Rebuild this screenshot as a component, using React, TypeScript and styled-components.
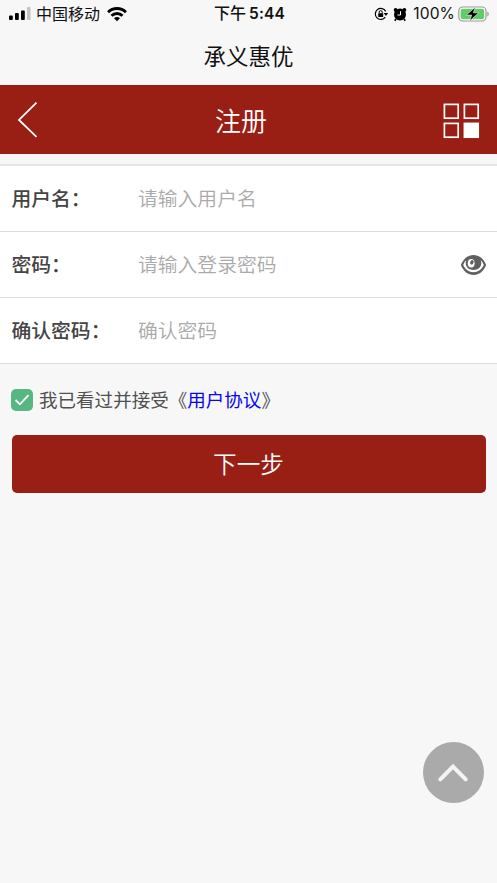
import React, { useState } from 'react';
import styled, { createGlobalStyle } from 'styled-components';

const RED = '#991e14';

const GlobalStyle = createGlobalStyle`
  * { box-sizing: border-box; }
  html, body { margin: 0; background: #f7f7f7; }
  body, input, button {
    font-family: "Noto Sans CJK SC", sans-serif;
  }
`;

const Screen = styled.main`
  position: relative;
  display: flex;
  flex-direction: column;
  width: 100%;
  height: 883px;
  overflow: hidden;
  background: #f7f7f7;
`;

const StatusBar = styled.div`
  display: grid;
  grid-template-columns: 1fr auto 1fr;
  align-items: center;
  height: 27px;
  padding: 0 7px 0 9px;
  font-family: Inter, "Noto Sans CJK SC", sans-serif;
  font-size: 16px;
  line-height: 27px;
  color: #111;
  white-space: nowrap;
`;

const StatusGroup = styled.div<{ $end?: boolean }>`
  display: flex;
  align-items: center;
  justify-content: ${(p) => (p.$end ? 'flex-end' : 'flex-start')};
  svg { display: block; flex: none; }
`;

const Carrier = styled.span`
  margin: 0 7px 0 5px;
`;

const Clock = styled.div`
  display: flex;
  gap: 3px;
  font-weight: 500;
`;

const Digits = styled.span`
  font-weight: 600;
  font-size: 15.5px;
  letter-spacing: 0.2px;
  line-height: 28px;
`;

const Percent = styled.span`
  margin: 0 3px 0 6px;
  font-size: 15.6px;
  letter-spacing: 0.1px;
  line-height: 28px;
`;

const PageTitle = styled.div`
  height: 58px;
  padding-top: 1px;
  font-size: 22.5px;
  line-height: 55px;
  text-align: center;
  color: #111;
`;

const NavBar = styled.header`
  display: grid;
  grid-template-columns: 60px 1fr 60px;
  align-items: center;
  height: 69px;
  background: ${RED};
  color: #fff;
`;

const NavTitle = styled.h1`
  margin: 0;
  padding-right: 15px;
  font-size: 26px;
  font-weight: 350;
  line-height: 69px;
  text-align: center;
`;

const NavButton = styled.button<{ $end?: boolean }>`
  display: flex;
  justify-content: ${(p) => (p.$end ? 'flex-end' : 'flex-start')};
  padding: ${(p) => (p.$end ? '2px 17px 0 0' : '0 0 0 17px')};
  border: 0;
  background: none;
  svg { display: block; }
`;

const Form = styled.form`
  display: flex;
  flex-direction: column;
  margin-top: 10px;
`;

const Fields = styled.div`
  border-top: 2px solid #e6e6e6;
`;

const Field = styled.label`
  display: flex;
  align-items: center;
  height: 66px;
  padding: 0 10px 0 11.5px;
  border-bottom: 1px solid #dcdcdc;
  background: #fff;
`;

const FieldName = styled.span`
  flex: 0 0 126.5px;
  padding-bottom: 2px;
  font-size: 19.8px;
  font-weight: 500;
  color: #444;
`;

const FieldInput = styled.input`
  flex: 1;
  min-width: 0;
  height: 40px;
  padding: 0 0 2px;
  border: 0;
  outline: 0;
  background: none;
  font-size: 19.8px;
  color: #444;
  &::placeholder { color: #aaa; opacity: 1; font-weight: 350; }
`;

const RevealButton = styled.button`
  padding: 0;
  border: 0;
  background: none;
  svg { display: block; }
`;

const Agreement = styled.div`
  display: flex;
  align-items: center;
  height: 71px;
  padding: 0 12px 0 11px;
  font-size: 18.55px;
  color: #505050;
`;

const AgreementText = styled.span`
  padding-bottom: 2px;
`;

const CheckBox = styled.button`
  display: flex;
  align-items: center;
  justify-content: center;
  width: 22px;
  height: 22px;
  margin-right: 6px;
  padding: 0;
  border: 0;
  border-radius: 5px;
  background: #56b783;
`;

const Terms = styled.a`
  color: #0505ee;
  text-decoration: none;
`;

const Submit = styled.button`
  height: 57.5px;
  margin: 0 11.5px;
  padding: 0 0 1px;
  border: 0;
  border-radius: 5px;
  background: ${RED};
  color: #fff;
  font-size: 23.6px;
  font-weight: 350;
`;

const ToTop = styled.button`
  position: absolute;
  right: 13.5px;
  bottom: 80px;
  display: flex;
  align-items: center;
  justify-content: center;
  width: 61px;
  height: 61px;
  padding: 0;
  border: 0;
  border-radius: 50%;
  background: #aaa;
`;

const Signal = () => (
  <svg width="22" height="14" viewBox="0 0 22 14">
    <rect x="0" y="8.5" width="3.8" height="4.5" rx="1" fill="#000" />
    <rect x="6" y="6" width="3.8" height="7" rx="1" fill="#000" />
    <rect x="12" y="3.5" width="3.8" height="9.5" rx="1" fill="#000" />
    <rect x="18" y="0" width="3.6" height="13" rx="1" fill="#c4c4c4" />
  </svg>
);

const Wifi = () => (
  <svg width="20" height="15" viewBox="0 0 20 15" fill="none" stroke="#000" strokeWidth="2.9">
    <path d="M1.1 5.2a12.6 12.6 0 0 1 17.8 0" />
    <path d="M4.5 8.8a7.8 7.8 0 0 1 11 0" />
    <path d="M10 14.3l-3-3a4.2 4.2 0 0 1 6 0z" fill="#000" stroke="none" />
  </svg>
);

const RotationLock = () => (
  <svg width="15" height="14" viewBox="0 0 15 14">
    <path d="M11.7 4.4A5.5 5.5 0 1 0 11.3 10.2" fill="none" stroke="#000" strokeWidth="1.2" />
    <path d="M9.7 6.1h4.4l-2.2 2.9z" />
    <rect x="4.2" y="6.3" width="5" height="3.7" rx=".6" />
    <path d="M5.2 6.5V5.1a1.5 1.5 0 0 1 3 0v1.400" fill="none" stroke="#000" />
  </svg>
);

const Alarm = () => (
  <svg width="14" height="15" viewBox="0 0 14 15">
    <circle cx="7" cy="7.5" r="6" />
    <circle cx="2.6" cy="2.9" r="1.9" />
    <circle cx="11.4" cy="2.9" r="1.9" />
    <path d="M3 12l-1.2 1.7M11 12l1.2 1.7" stroke="#000" strokeWidth="1.7" />
    <path d="M7.5 4.2v3.8H4.5" fill="none" stroke="#fff" />
  </svg>
);

const Battery = () => (
  <svg width="32" height="16" viewBox="0 0 32 16">
    <rect x=".8" y="1" width="27.2" height="14" rx="4" fill="#fff" stroke="#999" strokeWidth="1.2" />
    <rect x="2.6" y="2.8" width="23.6" height="10.4" rx="2.2" fill="#62cc68" />
    <path d="M29.3 5.7c2 .7 2 4 0 4.7z" fill="#999" />
    <path d="M17.3 1.2L8.3 9.1h5.4l-2 5.8 9-8.1h-5.4z" fill="#000" stroke="#f7f7f7" strokeWidth=".6" />
  </svg>
);

const BackIcon = () => (
  <svg width="22" height="38" viewBox="0 0 22 38" fill="none" stroke="#fff" strokeWidth="1.8">
    <path d="M19.5 1.7L2 18.9l17.5 17" />
  </svg>
);

const GridIcon = () => (
  <svg width="37" height="36" viewBox="0 0 37 36" fill="none" stroke="#fff" strokeWidth="1.7">
    <rect x="1.4" y="1.4" width="13.8" height="13.8" />
    <rect x="21.4" y="1.4" width="13.8" height="13.8" />
    <rect x="1.4" y="20.4" width="13.8" height="13.8" />
    <rect x="21.4" y="20.4" width="13.8" height="13.8" fill="#fff" />
  </svg>
);

const EyeIcon = () => (
  <svg width="27" height="22" viewBox="0 0 27 22">
    <path d="M.8 11C3.5 4.5 8 1 13.5 1s10 3.5 12.7 10C23.5 17.5 19 21 13.5 21S3.5 17.5.8 11z" fill="#606060" />
    <path d="M6.2 6.2C4.8 7.5 3.9 9.2 3.2 11c2.100 4.500 5.700 7.200 10.300 7.200s8.200-2.700 10.300-7.200c-.7-1.800-1.600-3.500-3-4.800 1.800 5.500-1.700 9.800-7.300 9.800S4.400 11.700 6.200 6.200z" fill="#fff" />
    <ellipse cx="11.2" cy="9.3" rx="3.4" ry="4.300" fill="#fff" />
    <ellipse cx="11.900" cy="8.300" rx="1.700" ry="2.300" fill="#606060" transform="rotate(25 11.900 8.300)" />
  </svg>
);

const CheckIcon = () => (
  <svg width="16" height="14" viewBox="0 0 16 14" fill="none" stroke="#fff" strokeWidth="1.8">
    <path d="M1.6 7l4.3 4.3 8.6-9.2" />
  </svg>
);

const UpIcon = () => (
  <svg width="32" height="20" viewBox="0 0 32 20" fill="none" stroke="#f4f4f4" strokeWidth="4" strokeLinecap="round">
    <path d="M3.3 16.4L16 3.6l12.7 12.8" strokeLinejoin="miter" />
  </svg>
);

const fields = [
  { name: '用户名：', hint: '请输入用户名', type: 'text' },
  { name: '密码：', hint: '请输入登录密码', type: 'password', reveal: true },
  { name: '确认密码：', hint: '确认密码', type: 'password' },
];

export default function App() {
  const [accepted, setAccepted] = useState(true);
  const [visible, setVisible] = useState(false);

  return (
    <>
      <GlobalStyle />
      <Screen lang="zh-CN">
        <StatusBar>
          <StatusGroup>
            <Signal />
            <Carrier>中国移动</Carrier>
            <Wifi />
          </StatusGroup>
          <Clock>
            下午<Digits>5:44</Digits>
          </Clock>
          <StatusGroup $end>
            <RotationLock />
            <span>&nbsp;</span>
            <Alarm />
            <Percent>100%</Percent>
            <Battery />
          </StatusGroup>
        </StatusBar>
        <PageTitle>承义惠优</PageTitle>
        <NavBar>
          <NavButton aria-label="返回"><BackIcon /></NavButton>
          <NavTitle>注册</NavTitle>
          <NavButton $end aria-label="菜单"><GridIcon /></NavButton>
        </NavBar>
        <Form onSubmit={(e) => e.preventDefault()}>
          <Fields>
            {fields.map((f) => (
              <Field key={f.name}>
                <FieldName>{f.name}</FieldName>
                <FieldInput type={f.reveal && visible ? 'text' : f.type} placeholder={f.hint} />
                {f.reveal && (
                  <RevealButton type="button" aria-label="显示密码" onClick={() => setVisible(!visible)}>
                    <EyeIcon />
                  </RevealButton>
                )}
              </Field>
            ))}
          </Fields>
          <Agreement>
            <CheckBox type="button" aria-label="同意" onClick={() => setAccepted(!accepted)}>
              {accepted && <CheckIcon />}
            </CheckBox>
            <AgreementText>我已看过并接受《<Terms href="#">用户协议</Terms>》</AgreementText>
          </Agreement>
          <Submit>下一步</Submit>
        </Form>
        <ToTop aria-label="回到顶部"><UpIcon /></ToTop>
      </Screen>
    </>
  );
}
